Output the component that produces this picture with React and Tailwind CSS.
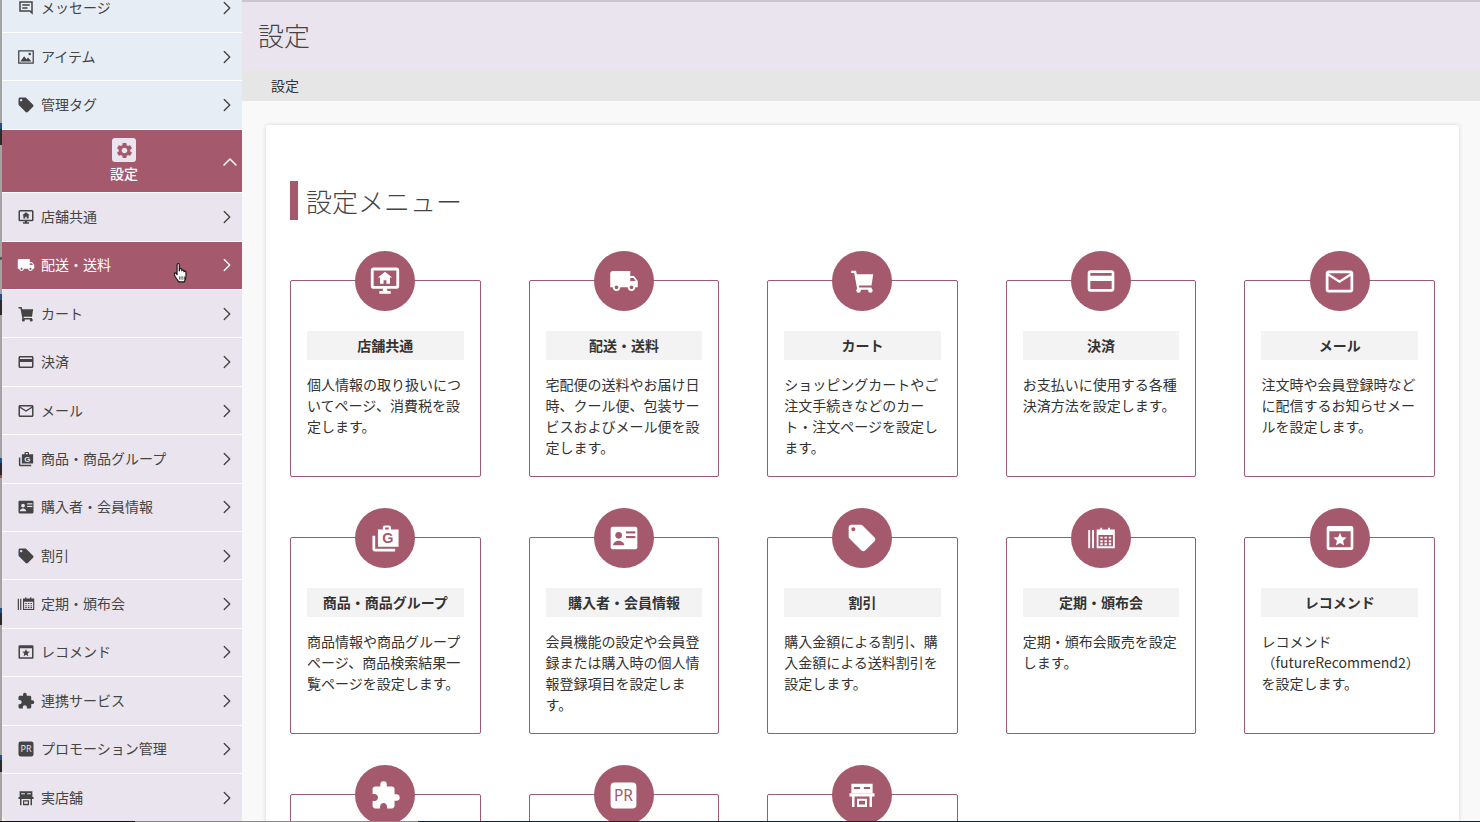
import { ChevronRight, ChevronUp } from "lucide-react"
import {
  MdLocalOffer,
  MdLocalShipping,
  MdOutlineCreditCard,
  MdMailOutline,
  MdExtension,
  MdSettings,
} from "react-icons/md"

const MAROON = "#a5596d"
const LILAC = "#e9e4ed"

// icons the packages don't have. cut = colour of the background behind the icon
const MessageIcon = ({ size }) => (
  <svg width={size} height={size} viewBox="0 0 24 24" fill="currentColor">
    <path fillRule="evenodd" d="M3 3h18v18l-4-4H3V3zm2 2v10h12.800l1.200 1.200V5H5zm2 2h10v2H7V7zm0 4h7v2H7v-2z" />
  </svg>
)

const ImageBoxIcon = ({ size }) => (
  <svg width={size} height={size} viewBox="0 0 24 24" fill="currentColor">
    <path fillRule="evenodd" d="M1.500 3h21v18h-21V3zm1.700 1.700v14.600h17.600V4.700H3.200z" />
    <path d="M4.500 18l5-7 3.200 4 2-2.500 4.500 5.500z" />
    <circle cx="17" cy="8" r="1.700" />
  </svg>
)

const CartIcon = ({ size }) => (
  <svg width={size} height={size} viewBox="0 0 24 24" fill="currentColor">
    <path d="M2 2.500h4.200L7 5.500h14.500L20 15.500H8.800l.3 1.800H20v2H7.400L4.600 4.500H2z" />
    <circle cx="8.500" cy="20" r="2" />
    <circle cx="19" cy="20" r="2" />
  </svg>
)

const MonitorIcon = ({ size }) => (
  <svg width={size} height={size} viewBox="0 0 24 24" fill="currentColor">
    <path fillRule="evenodd" d="M4 2.500h16a2 2 0 0 1 2 2v11a2 2 0 0 1-2 2h-6.500V19H16v2H8v-2h2.500v-1.500H4a2 2 0 0 1-2-2v-11a2 2 0 0 1 2-2zm0 2v11h16v-11H4z" />
    <path d="M12 5.500l5 4h-1.500V14H13v-2.500h-2V14H8.500V9.500H7z" />
  </svg>
)

const BagIcon = ({ size, cut }) => (
  <svg width={size} height={size} viewBox="0 0 24 24" fill="currentColor">
    <path d="M2.500 10H4.500V19.500H19V21.500H4.500a2 2 0 0 1-2-2V10z" />
    <path fillRule="evenodd" d="M11.500 2.500h3a1.500 1.500 0 0 1 1.500 1.500v1.500h5.500V18H6.500V5.500H10V4a1.500 1.500 0 0 1 1.500-1.500zm.2 1.500v1.500h2.600V4h-2.600z" />
    <text x="13.800" y="15.500" textAnchor="middle" fontSize="10.500" fontWeight="700" fontFamily="Liberation Sans" fill={cut}>G</text>
  </svg>
)

const IdCardIcon = ({ size, cut }) => (
  <svg width={size} height={size} viewBox="0 0 24 24" fill="currentColor">
    <rect x="2" y="3.500" width="20" height="17" rx="1.500" />
    <circle cx="8" cy="10" r="2.500" fill={cut} />
    <path d="M3.800 17.500c0-2.300 2.400-3.500 4.200-3.500s4.200 1.200 4.200 3.500z" fill={cut} />
    <rect x="13.500" y="7" width="7" height="1.600" fill={cut} />
    <rect x="13.500" y="10.500" width="7" height="1.600" fill={cut} />
  </svg>
)

const CalendarIcon = ({ size }) => (
  <svg width={size} height={size} viewBox="0 0 24 24" fill="currentColor">
    <rect x="1" y="5" width="1.600" height="15" />
    <rect x="4.200" y="5" width="1.600" height="15" />
    <path fillRule="evenodd" d="M11 3h1.500v1.500h5V3H19v1.500h4V20H8V4.500h3V3zM9.500 9v9.500h12V9h-12z" />
    <path d="M11 10.500h2v1.500h-2zM14.500 10.500h2v1.500h-2zM18 10.500h2v1.500h-2zM11 13.500h2v1.500h-2zM14.500 13.500h2v1.500h-2zM18 13.500h2v1.500h-2zM11 16h2v1.500h-2zM14.500 16h2v1.500h-2zM18 16h2v1.500h-2z" />
  </svg>
)

const StarWindowIcon = ({ size }) => (
  <svg width={size} height={size} viewBox="0 0 24 24" fill="currentColor">
    <path fillRule="evenodd" d="M3.500 3h17A1.500 1.500 0 0 1 22 4.500v15a1.500 1.500 0 0 1-1.500 1.500h-17A1.500 1.500 0 0 1 2 19.500v-15A1.500 1.500 0 0 1 3.500 3zM4 7v12h16V7H4z" />
    <polygon points="12,8 13.400,11.400 17,11.700 14.300,14 15.100,17.600 12,15.700 8.900,17.600 9.700,14 7,11.700 10.600,11.400" />
  </svg>
)

const PrIcon = ({ size, cut }) => (
  <svg width={size} height={size} viewBox="0 0 24 24">
    <rect x="2" y="2" width="20" height="20" rx="3" fill="currentColor" />
    <text x="12" y="16.500" textAnchor="middle" fontSize="12" fontFamily="Noto Sans" fill={cut}>PR</text>
  </svg>
)

const StoreIcon = ({ size }) => (
  <svg width={size} height={size} viewBox="0 0 24 24" fill="currentColor">
    <path fillRule="evenodd" d="M3.500 3h17v7.500h-17V3zm2 2.500v1.600h5V5.500h-5zm8 0v1.600h5V5.500h-5z" />
    <path d="M2 10.500h20v2.700H2zM4 13.200h2v8.300H4zM18 13.200h2v8.300h-2zM8 15h8v1.600H8zM8 15h1.600v6.500H8zM14.400 15H16v6.500h-1.600zM8 19.500h8v2H8z" />
  </svg>
)

const HandCursor = () => (
  <svg width="17" height="21" viewBox="0 0 15 19" className="absolute left-[171px] top-[20px]">
    <path
      d="M3.500 2.500c0-1.500 2-1.500 2 0V8l.5-1.500c.3-1 1.800-.8 1.800.3V8c.2-1 1.800-1 1.900.2v.6c.3-.9 1.800-.7 1.800.4v4c0 2-1 3.800-1.500 4.800H5c-.5-1-1.500-2-3-4.500C1.200 12 .6 10.500 1.300 10c.8-.5 1.700.4 2.200 1.500V2.500z"
      fill="#fff"
      stroke="#111"
      strokeWidth="1"
      strokeLinejoin="round"
    />
    <path d="M6 13v3M8 13v3M10 13v3" stroke="#111" strokeWidth="0.800" />
  </svg>
)

const topItems = [
  { label: "メッセージ", icon: MessageIcon },
  { label: "アイテム", icon: ImageBoxIcon },
  { label: "管理タグ", icon: MdLocalOffer },
]

const subItems = [
  { label: "店舗共通", icon: MonitorIcon },
  { label: "配送・送料", icon: MdLocalShipping, active: true },
  { label: "カート", icon: CartIcon },
  { label: "決済", icon: MdOutlineCreditCard },
  { label: "メール", icon: MdMailOutline },
  { label: "商品・商品グループ", icon: BagIcon },
  { label: "購入者・会員情報", icon: IdCardIcon },
  { label: "割引", icon: MdLocalOffer },
  { label: "定期・頒布会", icon: CalendarIcon },
  { label: "レコメンド", icon: StarWindowIcon },
  { label: "連携サービス", icon: MdExtension },
  { label: "プロモーション管理", icon: PrIcon },
  { label: "実店舗", icon: StoreIcon },
]

const cards = [
  { title: "店舗共通", icon: MonitorIcon, text: "個人情報の取り扱いについてページ、消費税を設定します。" },
  { title: "配送・送料", icon: MdLocalShipping, size: 30, text: "宅配便の送料やお届け日時、クール便、包装サービスおよびメール便を設定します。" },
  { title: "カート", icon: CartIcon, size: 27, text: "ショッピングカートやご注文手続きなどのカート・注文ページを設定します。" },
  { title: "決済", icon: MdOutlineCreditCard, size: 32, text: "お支払いに使用する各種決済方法を設定します。" },
  { title: "メール", icon: MdMailOutline, size: 33, text: "注文時や会員登録時などに配信するお知らせメールを設定します。" },
  { title: "商品・商品グループ", icon: BagIcon, size: 33, text: "商品情報や商品グループページ、商品検索結果一覧ページを設定します。" },
  { title: "購入者・会員情報", icon: IdCardIcon, size: 32, text: "会員機能の設定や会員登録または購入時の個人情報登録項目を設定します。" },
  { title: "割引", icon: MdLocalOffer, size: 32, text: "購入金額による割引、購入金額による送料割引を設定します。" },
  { title: "定期・頒布会", icon: CalendarIcon, size: 29, text: "定期・頒布会販売を設定します。" },
  { title: "レコメンド", icon: StarWindowIcon, size: 32, text: "レコメンド（futureRecommend2）を設定します。" },
  // last row runs off the bottom of the window, only the tops show
  { icon: MdExtension, size: 31 },
  { icon: PrIcon, size: 31 },
  { icon: StoreIcon, size: 30 },
]

const SideRow = ({ item, blue }) => {
  const Icon = item.icon
  const cls = item.active
    ? "bg-[#a5596d] text-white"
    : blue
      ? "bg-[#e7edf4] text-[#444]"
      : "bg-[#e9e4ed] text-[#444]"
  return (
    <div className={`relative flex h-[48.4px] shrink-0 items-center border-b border-white pl-[15px] pr-[4px] text-sm ${cls}`}>
      <Icon size={18} cut={item.active ? MAROON : LILAC} />
      <span className="ml-[6px] flex-1 pb-[2px]">{item.label}</span>
      <ChevronRight size={22} strokeWidth={1.5} />
      {item.active && <HandCursor />}
    </div>
  )
}

const Sidebar = () => (
  <aside className="-mt-[15.5px] flex w-[240px] shrink-0 flex-col overflow-hidden rounded-bl-[6px]">
    {topItems.map((item) => (
      <SideRow key={item.label} item={item} blue />
    ))}
    <div className="grid h-[63.6px] shrink-0 grid-cols-[1fr_auto_1fr] items-center border-b border-white bg-[#a5596d] pl-[4px] text-white">
      <div />
      <div className="flex flex-col items-center pt-[1px]">
        <div className="flex h-[24px] w-[24px] items-center justify-center rounded-[3px] bg-[#e9e4ed] text-[#a5596d]">
          <MdSettings size={19} />
        </div>
        <span className="mt-[1px] pb-[1px] text-sm leading-[20px] font-medium">設定</span>
      </div>
      <div className="flex justify-end pt-[2px]">
        <ChevronUp size={24} strokeWidth={1.5} />
      </div>
    </div>
    {subItems.map((item) => (
      <SideRow key={item.label} item={item} />
    ))}
  </aside>
)

const MenuCard = ({ card }) => {
  const Icon = card.icon
  return (
    <div className="h-[197px] rounded-[2px] border border-[#9b5a70] px-4">
      <div className="mx-auto -mt-[30px] flex h-[60px] w-[60px] items-center justify-center rounded-full bg-[#a5596d] text-white">
        <Icon size={card.size || 34} cut={MAROON} />
      </div>
      {card.title && (
        <>
          <h3 className="mt-[20px] flex h-[29px] items-center justify-center bg-[#f3f3f3] pb-[2px] text-sm font-bold text-[#333]">
            {card.title}
          </h3>
          <p className="mt-[14px] text-sm leading-[21px] text-[#333]">{card.text}</p>
        </>
      )}
    </div>
  )
}

const LeftStrip = () => (
  <div className="flex w-[2px] shrink-0 flex-col bg-[#a3a3a3]">
    <div className="mt-[123px] h-[6px] bg-[#1d4f91]" />
    <div className="h-[16px] bg-[#2a2a2a]" />
    <div className="mt-[112px] h-[2px] bg-[#555]" />
    <div className="h-[1px] bg-[#b5433a]" />
    <div className="mt-[34px] h-[6px] bg-[#1d4f91]" />
    <div className="h-[15px] bg-[#2a2a2a]" />
    <div className="mt-[143px] h-[5px] bg-[#1d4f91]" />
    <div className="h-[12px] bg-[#2a2a2a]" />
    <div className="h-[3px] bg-[#b5433a]" />
    <div className="mt-[130px] h-[5px] bg-[#1d4f91]" />
    <div className="h-[12px] bg-[#2a2a2a]" />
    <div className="mt-[130px] h-[5px] bg-[#1d4f91]" />
    <div className="h-[12px] bg-[#2a2a2a]" />
  </div>
)

const App = () => {
  return (
    <div className="flex h-screen flex-col overflow-hidden bg-[#f9f9f9] font-['Noto_Sans_CJK_JP','Noto_Sans',sans-serif]">
      <div className="flex min-h-0 flex-1">
        <LeftStrip />
        <Sidebar />
        <main className="flex min-w-0 flex-1 flex-col">
          <div className="h-[2px] shrink-0 bg-[#c9c6cc]" />
          <div className="flex h-[68px] shrink-0 items-center bg-[#e9e4ed] pb-[4px] pl-[16px] text-[26px] font-light text-[#444]">
            設定
          </div>
          <div className="flex h-[31px] shrink-0 items-center bg-[#e6e6e6] pb-[2px] pl-[29px] text-sm text-[#333]">設定</div>
          <div className="mt-[24px] ml-[24px] mr-[21px] rounded-[3px] bg-white px-[24px] pt-[56px] shadow-[0_0_4px_rgba(0,0,0,0.15)]">
            <h2 className="flex h-[39px] items-center border-l-[8px] border-[#a5596d] pl-[8px] text-[26px] font-light text-[#444]">
              設定メニュー
            </h2>
            <div className="mt-[60px] grid grid-cols-5 gap-x-[48px] gap-y-[60px]">
              {cards.map((card, i) => (
                <MenuCard key={i} card={card} />
              ))}
            </div>
          </div>
        </main>
      </div>
      <div className="flex h-px shrink-0">
        <div className="w-[135px] bg-[#111]" />
        <div className="w-[283px] bg-[#888]" />
        <div className="flex-1 bg-[#0b2545]" />
      </div>
    </div>
  )
}

export default App
